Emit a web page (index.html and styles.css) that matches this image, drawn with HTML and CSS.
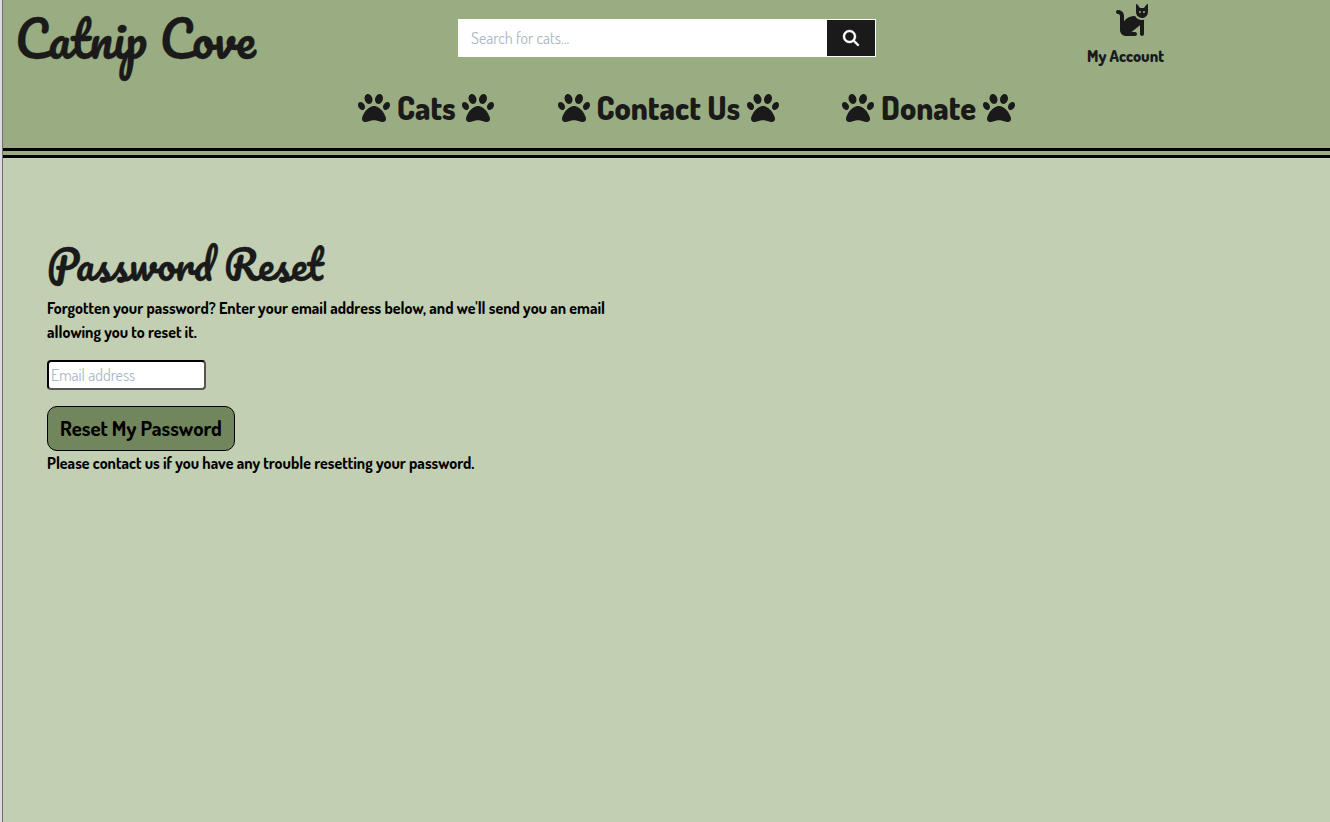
FILE: index.html
```html
<!DOCTYPE html>
<html lang="en">
<head>
<meta charset="utf-8">
<title>Catnip Cove</title>
<link rel="stylesheet" href="styles.css">
</head>
<body>
<svg class="sprite" aria-hidden="true">
  <symbol id="paw" viewBox="0 0 512 512"><path d="M226.5 92.9c14.3 42.9-.3 86.2-32.6 96.8s-70.1-15.6-84.4-58.5s.3-86.2 32.6-96.8s70.1 15.6 84.4 58.5zM100.4 198.6c18.9 32.4 14.3 70.1-10.2 84.1s-59.7-.9-78.5-33.3S-2.7 179.3 21.8 165.3s59.7 .9 78.5 33.3zM69.2 401.2C121.6 259.9 214.7 224 256 224s134.4 35.9 186.8 177.2c3.6 9.7 5.2 20.1 5.2 30.5v1.6c0 25.8-20.9 46.7-46.7 46.7c-11.5 0-22.9-1.4-34-4.2l-88-22c-15.3-3.8-31.3-3.8-46.6 0l-88 22c-11.1 2.8-22.5 4.2-34 4.2C84.9 480 64 459.1 64 433.3v-1.6c0-10.4 1.6-20.8 5.2-30.5zM421.8 282.7c-24.5-14-29.1-51.7-10.2-84.1s54-47.3 78.5-33.3s29.1 51.7 10.2 84.1s-54 47.3-78.5 33.3zM310.1 189.7c-32.3-10.6-46.9-53.9-32.6-96.8s52.1-69.1 84.4-58.5s46.9 53.9 32.6 96.8s-52.1 69.1-84.4 58.5z"/></symbol>
</svg>
<header class="header">
  <div class="top">
    <a class="brand">Catnip Cove</a>
    <form class="search">
      <input class="search-input" type="text" placeholder="Search for cats...">
      <button class="search-button" type="button" aria-label="Search"><svg width="16" height="16" viewBox="0 0 512 512"><path d="M416 208c0 45.9-14.9 88.3-40 122.7L502.6 457.4c12.5 12.5 12.5 32.8 0 45.3s-32.8 12.5-45.3 0L330.7 376c-34.4 25.2-76.8 40-122.7 40C93.1 416 0 322.9 0 208S93.1 0 208 0S416 93.1 416 208zM208 352a144 144 0 1 0 0-288 144 144 0 1 0 0 288z"/></svg></button>
    </form>
    <a class="account">
      <svg class="cat" width="36" height="32" viewBox="0 0 576 512"><path d="M320 192h17.1c22.1 38.3 63.5 64 110.9 64c11 0 21.8-1.4 32-4v4 32V480c0 17.7-14.3 32-32 32s-32-14.3-32-32V339.2L280 448h56c17.7 0 32 14.3 32 32s-14.3 32-32 32H192c-53 0-96-43-96-96V192.5c0-16.1-12-29.8-28-31.8l-7.9-1c-17.5-2.2-30-18.2-27.8-35.7s18.2-30 35.7-27.8l7.9 1c48 6 84.1 46.8 84.1 95.3v85.3c34.4-51.7 93.2-85.8 160-85.8zm160 26.5v0c-10 3.5-20.8 5.5-32 5.5c-28.4 0-54-12.4-71.6-32h0c-3.7-4.1-7-8.5-9.9-13.2C357.3 164 352 146.6 352 128v0V32 12 10.7C352 4.8 356.7 .1 362.6 0h.2c3.3 0 6.4 1.6 8.4 4.2l0 .1L384 21.3l27.2 36.3L416 64h64l4.8-6.4L512 21.3 524.8 4.3l0-.1c2-2.6 5.1-4.2 8.4-4.2h.2C539.3 .1 544 4.8 544 10.7V12 32v96c0 17.3-4.6 33.6-12.6 47.6c-11.3 19.8-29.6 35.2-51.4 42.9zM432 128a16 16 0 1 0 -32 0 16 16 0 1 0 32 0zm48 16a16 16 0 1 0 0-32 16 16 0 1 0 0 32z"/></svg>
      <span class="account-label">My Account</span>
    </a>
  </div>
  <nav class="nav">
    <a class="nav-link"><svg class="paw"><use href="#paw"/></svg><span class="label cats">Cats</span><svg class="paw"><use href="#paw"/></svg></a>
    <a class="nav-link"><svg class="paw"><use href="#paw"/></svg><span class="label contact">Contact Us</span><svg class="paw"><use href="#paw"/></svg></a>
    <a class="nav-link"><svg class="paw"><use href="#paw"/></svg><span class="label donate">Donate</span><svg class="paw"><use href="#paw"/></svg></a>
  </nav>
</header>
<div class="rule"></div>
<main class="main">
  <h1 class="title">Password Reset</h1>
  <p class="copy">Forgotten your password? Enter your email address below, and we'll send you an email<br>allowing you to reset it.</p>
  <input class="email" type="email" placeholder="Email address">
  <button class="reset" type="button">Reset My Password</button>
  <p class="copy">Please contact us if you have any trouble resetting your password.</p>
</main>
</body>
</html>
```
FILE: styles.css
```css
* { box-sizing: border-box; }
body {
  margin: 0;
  height: 822px;
  overflow: hidden;
  background: #c2cfb2;
  border-left: 2px solid #dcdcdc;
  box-shadow: inset 1px 0 #716f74;
  padding-left: 1px;
  font-family: Dosis, Lato, sans-serif;
  color: #000;
}
.sprite { position: absolute; width: 0; height: 0; }
svg { display: block; fill: currentColor; }
.header { height: 148px; background: #9aad82; color: #1a1a1a; }
.top { display: flex; height: 92px; }
.brand {
  width: 455px;
  padding-left: 12px;
  font: 400 48px/78px Pacifico, Lato, cursive;
  white-space: nowrap;
  -webkit-text-stroke: 0.3px #1a1a1a;
}
.search { display: flex; width: 418px; height: 38px; margin-top: 19px; background: #fff; }
.search-input {
  width: 369px;
  border: 0;
  padding: 0 13px;
  background: #fff;
  font: 16px Dosis, Lato, sans-serif;
}
input::placeholder { color: #aab7c4; opacity: 1; }
.search-button {
  width: 48px;
  height: 36px;
  margin-top: 1px;
  padding: 0;
  border: 0;
  display: grid;
  place-items: center;
  background: #1a1a1a;
  color: #fff;
}
.search-button svg { stroke: #fff; stroke-width: 12; overflow: visible; }
.account { width: 78px; margin-left: 211px; padding-top: 4px; }
.cat { margin-left: 27px; }
.account-label { display: block; font-size: 16px; font-weight: 800; line-height: 24px; margin-top: 8px; white-space: nowrap; }
.nav { display: flex; gap: 63.5px; padding-left: 355px; }
.nav-link { display: flex; gap: 7px; align-items: center; }
.paw { width: 32px; height: 32px; }
.label { font-size: 32px; font-weight: 800; line-height: 32px; white-space: nowrap; }
.cats { width: 58px; }
.contact { width: 143px; }
.donate { width: 95px; }
.rule { height: 10px; border-top: 3px solid #000; border-bottom: 3px solid #000; background: #9aad82; }
.main { display: flex; flex-direction: column; align-items: flex-start; padding: 80px 44px 0; }
.title { margin: 0; height: 58px; font: 400 40px/52px Pacifico, Lato, cursive; color: #1a1a1a; white-space: nowrap; -webkit-text-stroke: 0.3px #1a1a1a; }
.copy { margin: 0; font-size: 16px; font-weight: 700; line-height: 24px; white-space: nowrap; }
.email {
  width: 159px;
  height: 30px;
  margin: 16px 0;
  padding: 1px 2px;
  border: 2px inset #555;
  border-color: #000 #555 #555 #000;
  border-radius: 4px;
  background: #fff;
  font: 16px Dosis, Lato, sans-serif;
}
.reset {
  width: 188px;
  height: 45px;
  padding: 0 0 2px;
  border: 1px solid #000;
  border-radius: 10px;
  background: #71865d;
  color: #000;
  font: 700 20.8px Dosis, Lato, sans-serif;
  white-space: nowrap;
}
```
